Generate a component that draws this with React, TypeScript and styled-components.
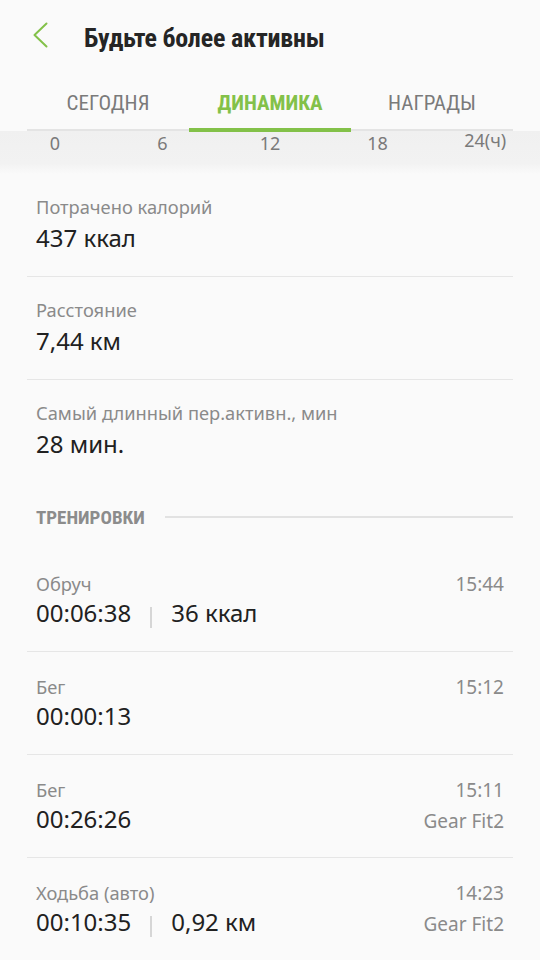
import React from "react";
import styled, { createGlobalStyle } from "styled-components";

const Global = createGlobalStyle`
  html, body { margin: 0; padding: 0; background: #fafafa; }
  body { font-family: "Noto Sans", "Open Sans", sans-serif; -webkit-font-smoothing: antialiased; }
  * { box-sizing: border-box; }
`;

const GREEN = "#83c149";

const Page = styled.div`
  width: 540px;
  height: 960px;
  overflow: hidden;
  background: #fafafa;
`;

const Header = styled.header`
  height: 72px;
  padding: 4px 0 0 32px;
  display: flex;
  align-items: center;
`;

const Back = styled.button`
  border: 0;
  background: none;
  padding: 0;
  margin: 0 36px 6px 0;
  width: 16px;
  height: 26px;
  display: flex;
`;

const Title = styled.h1`
  margin: 0;
  font-family: Roboto, "Liberation Sans", sans-serif;
  font-stretch: 75%;
  font-weight: 700;
  font-size: 26px;
  line-height: 32px;
  color: #252525;
  letter-spacing: -0.2px;
`;

const Tabs = styled.nav`
  margin: 0 27px;
  height: 59px;
  display: grid;
  grid-template-columns: repeat(3, 1fr);
  border-bottom: 2px solid #e4e4e4;
`;

const Tab = styled.div<{ $active?: boolean }>`
  position: relative;
  padding-top: 17px;
  text-align: center;
  font-family: Roboto, "Liberation Sans", sans-serif;
  font-stretch: 75%;
  font-size: 21px;
  line-height: 28px;
  font-weight: ${(p) => (p.$active ? 700 : 400)};
  color: ${(p) => (p.$active ? GREEN : "#7a7a7a")};
  &::after {
    content: "";
    display: ${(p) => (p.$active ? "block" : "none")};
    position: absolute;
    left: 0;
    right: 0;
    bottom: -3px;
    height: 4px;
    background: ${GREEN};
  }
`;

const Axis = styled.div`
  height: 43px;
  padding: 0 1px;
  display: grid;
  grid-template-columns: repeat(5, 1fr);
  background: linear-gradient(#f0f0f0, #f2f2f2 75%, #fafafa);
`;

const Tick = styled.span<{ $raise?: boolean }>`
  text-align: center;
  font-size: 18px;
  line-height: 24px;
  color: #7a7a7a;
  margin-top: ${(p) => (p.$raise ? "-3px" : "0")};
`;

const List = styled.section`
  margin: 0 27px;
`;

const StatRow = styled.div`
  padding: 20px 9px 22px;
  display: flex;
  flex-direction: column;
  gap: 2px;
  border-bottom: 1px solid #e6e6e6;
  &:last-child { border-bottom: 0; }
`;

const Label = styled.div`
  font-size: 18.3px;
  line-height: 26px;
  color: #8a8a8a;
`;

const Value = styled.div`
  font-size: 24px;
  line-height: 32px;
  color: #212121;
  display: flex;
  align-items: center;
`;

const SectionHead = styled.div`
  height: 67px;
  padding: 17px 27px 12px 36px;
  display: flex;
  align-items: center;
  gap: 20px;
`;

const SectionTitle = styled.span`
  font-family: Roboto, "Liberation Sans", sans-serif;
  font-stretch: 75%;
  font-weight: 700;
  font-size: 19px;
  line-height: 38px;
  color: #8c8c8c;
`;

const SectionLine = styled.span`
  flex: 1;
  height: 2px;
  margin-top: -2px;
  background: #e2e2e2;
`;

const WorkoutRow = styled.div`
  padding: 22px 9px 22px;
  display: grid;
  grid-template-columns: 1fr auto;
  align-items: baseline;
  border-bottom: 1px solid #e6e6e6;
  &:last-child { border-bottom: 0; }
`;

const Side = styled.div`
  font-size: 19px;
  color: #8a8a8a;
  text-align: right;
`;

const Sep = styled.span`
  width: 2px;
  height: 21px;
  margin: 8px 19px 0 19px;
  background: #d6d6d6;
`;

type Workout = { name: string; time: string; dur: string; extra?: string; device?: string };

const workouts: Workout[] = [
  { name: "Обруч", time: "15:44", dur: "00:06:38", extra: "36 ккал" },
  { name: "Бег", time: "15:12", dur: "00:00:13" },
  { name: "Бег", time: "15:11", dur: "00:26:26", device: "Gear Fit2" },
  { name: "Ходьба (авто)", time: "14:23", dur: "00:10:35", extra: "0,92 км", device: "Gear Fit2" },
];

const stats = [
  { label: "Потрачено калорий", value: "437 ккал" },
  { label: "Расстояние", value: "7,44 км" },
  { label: "Самый длинный пер.активн., мин", value: "28 мин." },
];

export default function App() {
  return (
    <Page>
      <Global />
      <Header>
        <Back aria-label="Назад">
          <svg width="16" height="26" viewBox="0 0 16 26" fill="none">
            <polyline points="14.5,1.5 2.5,13 14.5,24.5" stroke={GREEN} strokeWidth="2" strokeLinecap="round" strokeLinejoin="round" />
          </svg>
        </Back>
        <Title>Будьте более активны</Title>
      </Header>
      <Tabs>
        <Tab>СЕГОДНЯ</Tab>
        <Tab $active>ДИНАМИКА</Tab>
        <Tab>НАГРАДЫ</Tab>
      </Tabs>
      <Axis>
        <Tick>0</Tick>
        <Tick>6</Tick>
        <Tick>12</Tick>
        <Tick>18</Tick>
        <Tick $raise>24(ч)</Tick>
      </Axis>
      <List>
        {stats.map((s) => (
          <StatRow key={s.label}>
            <Label>{s.label}</Label>
            <Value>{s.value}</Value>
          </StatRow>
        ))}
      </List>
      <SectionHead>
        <SectionTitle>ТРЕНИРОВКИ</SectionTitle>
        <SectionLine />
      </SectionHead>
      <List>
        {workouts.map((w, i) => (
          <WorkoutRow key={i}>
            <Label>{w.name}</Label>
            <Side>{w.time}</Side>
            <Value>
              {w.dur}
              {w.extra && (
                <>
                  <Sep />
                  {w.extra}
                </>
              )}
            </Value>
            <Side>{w.device ?? ""}</Side>
          </WorkoutRow>
        ))}
      </List>
    </Page>
  );
}
